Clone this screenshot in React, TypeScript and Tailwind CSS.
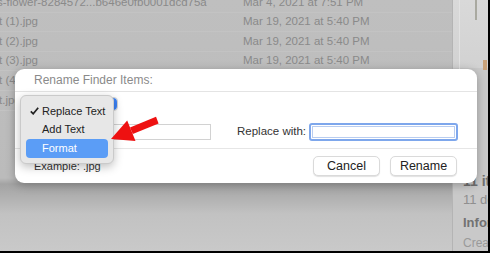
import React from "react";

const rows = [
  { name: "s-flower-8284572...b646e0fb0001dcd75a", date: "Mar 4, 2021 at 7:51 PM", off: "ml-[-3px] w-[246px]" },
  { name: "t (1).jpg", date: "Mar 19, 2021 at 5:40 PM", off: "ml-[-1px] w-[244px]" },
  { name: "t (2).jpg", date: "Mar 19, 2021 at 5:40 PM", off: "ml-[-1px] w-[244px]" },
  { name: "t (3).jpg", date: "Mar 19, 2021 at 5:40 PM", off: "ml-[-1px] w-[244px]" },
  { name: "t (4).jpg", date: "Mar 19, 2021 at 5:40 PM", off: "ml-[-1px] w-[244px]" },
  { name: "t.jpg", date: "Mar 19, 2021 at 5:40 PM", off: "ml-[-1px] w-[244px]" },
];

export default function App() {
  return (
    <div className="relative w-[490px] h-[253px] overflow-hidden border-r-[2px] border-b-[2px] border-black font-['Liberation_Sans',Arial,sans-serif]">
      <div className="flex h-full">
        {/* Finder list */}
        <div className="flex-1 flex flex-col bg-[linear-gradient(to_bottom,#bfbfbf_0px,#bbbbbb_178px,#a3a3a3_184px,#c2c2c2_214px,#c9c9c9_100%)]">
          <div className="mt-[-7px] flex flex-col">
            {rows.map((r, i) => (
              <div key={i} className="flex h-[19.6px] items-center text-[11.5px] text-[#8a8a8a] border-b border-[#c3c3c3]">
                <span className={`${r.off} whitespace-nowrap`}>{r.name}</span>
                <span className="whitespace-nowrap">{r.date}</span>
              </div>
            ))}
          </div>
        </div>
        {/* Sidebar */}
        <div className="w-[36px] border-l border-[#b4b4b4] bg-[#c9c9c9] flex flex-col">
          <div className="relative h-[72px] bg-[linear-gradient(to_bottom,#d9d9d9,#d2d2d2)]">
            <div className="absolute left-[22px] top-0 w-[2px] h-[20px] bg-[#a9a9a0]" />
            <div className="absolute left-[6px] top-0 w-[1px] h-[70px] bg-[#e2e2e2]" />
            <div className="absolute left-[30px] top-[60px] w-[4px] h-[10px] bg-[#c8a27a]" />
          </div>
          <div className="mt-[105px] pl-[10px] flex flex-col whitespace-nowrap">
            <div className="h-[16px] leading-[16px] text-[14px] font-bold text-[#6f6f6f]">11 items</div>
            <div className="mt-[3px] h-[16px] leading-[16px] text-[13px] text-[#8f8f8f]">11 documents</div>
            <div className="mt-[7px] h-[16px] leading-[16px] text-[13px] font-bold text-[#727272]">Information</div>
            <div className="mt-[4px] h-[16px] leading-[16px] text-[12px] text-[#9a9a9a]">Created</div>
          </div>
        </div>
      </div>

      {/* Sheet dialog */}
      <div className="absolute left-[15px] top-[69px] w-[462px] h-[114px] bg-white rounded-[9px] shadow-[0_2px_10px_rgba(0,0,0,0.28)] flex flex-col">
        <div className="h-[23px] px-[19px] flex items-center text-[12px] text-[#8a8a8a] border-b border-[#e4e4e4]">
          Rename Finder Items:
        </div>
        <div className="h-[57px] flex flex-col border-b border-[#e6e6e6]">
          <div className="h-[24px] flex items-center">
            <div className="ml-[45px] w-[58px] h-[14px] rounded-[4px] bg-white border border-[#d4d4d4] flex justify-end">
              <div className="w-[5px] h-full rounded-r-[4px] bg-[#3b82f6]" />
            </div>
          </div>
          <div className="mt-[7px] h-[18px] pl-[80px] pr-[19px] flex items-center text-[11.5px] text-[#333333]">
            <div className="w-[116px] h-[16px] border border-[#d2d2d2] bg-white" />
            <span className="ml-[26px] whitespace-nowrap">Replace with:</span>
            <div className="ml-auto w-[149px] h-[18px] rounded-[3px] border-[2px] border-[#7ea7ec] bg-white p-[1px]">
              <div className="w-full h-full border border-[#b9cdf0]" />
            </div>
          </div>
        </div>
        <div className="flex-1 flex items-center px-[19px] pr-[20px]">
          <span className="text-[11px] text-[#333333]">Example: .jpg</span>
          <div className="ml-auto flex gap-[10px]">
            <div className="w-[67px] h-[20px] rounded-[5px] bg-white border border-[#dadada] shadow-[0_1px_1px_rgba(0,0,0,0.12)] flex items-center justify-center text-[12.5px] text-[#222222]">
              Cancel
            </div>
            <div className="w-[67px] h-[20px] rounded-[5px] bg-white border border-[#dadada] shadow-[0_1px_1px_rgba(0,0,0,0.12)] flex items-center justify-center text-[12.5px] text-[#222222]">
              Rename
            </div>
          </div>
        </div>
      </div>

      {/* Popup menu */}
      <div className="absolute left-[20px] top-[95px] w-[94px] h-[69px] rounded-[6px] bg-[#e7e7e7] border border-[#cacaca] shadow-[0_3px_10px_rgba(0,0,0,0.25)] pt-[6px] px-[5px] flex flex-col text-[11px] text-[#222222]">
        <div className="h-[18px] flex items-center relative pl-[16px]">
          <svg className="absolute left-[4px] top-[5px]" width="9" height="8" viewBox="0 0 9 8">
            <path d="M0.8 4.3 L3.2 6.8 L8.2 0.8" fill="none" stroke="#222" strokeWidth="1.7" />
          </svg>
          Replace Text
        </div>
        <div className="h-[18px] flex items-center pl-[16px]">Add Text</div>
        <div className="mt-[1px] h-[19px] rounded-[4px] bg-[#5b9df6] text-white flex items-center pl-[16px]">Format</div>
      </div>

      {/* Red arrow */}
      <svg className="absolute left-0 top-0 pointer-events-none" width="490" height="253" viewBox="0 0 490 253">
        <polygon points="111,139 127.2,120.5 135.5,140.9" fill="#ee1111" />
        <polygon points="130,127.6 156,116.8 158.6,123.4 132.8,133.9" fill="#ee1111" />
      </svg>
    </div>
  );
}
